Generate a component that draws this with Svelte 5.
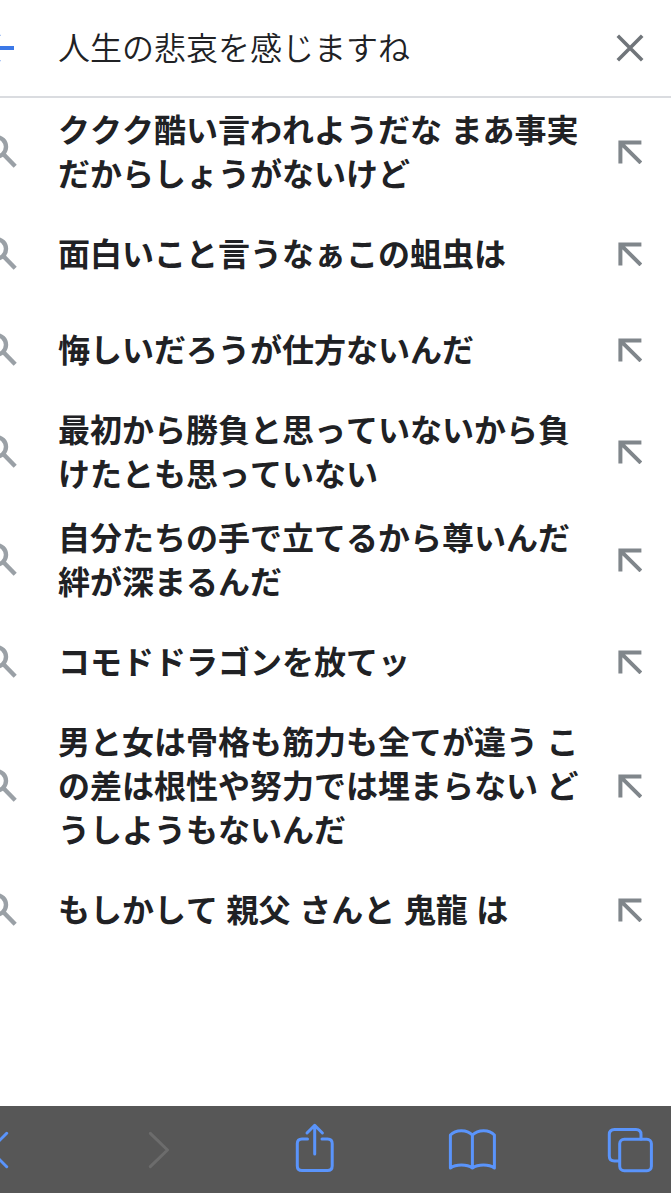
<script>
  const query = '人生の悲哀を感じますね'

  const suggestions = [
    ['ククク酷い言われようだな まあ事実', 'だからしょうがないけど'],
    ['面白いこと言うなぁこの蛆虫は'],
    ['悔しいだろうが仕方ないんだ'],
    ['最初から勝負と思っていないから負', 'けたとも思っていない'],
    ['自分たちの手で立てるから尊いんだ', '絆が深まるんだ'],
    ['コモドドラゴンを放てッ'],
    ['男と女は骨格も筋力も全てが違う こ', 'の差は根性や努力では埋まらない ど', 'うしようもないんだ'],
    ['もしかして 親父 さんと 鬼龍 は']
  ]
</script>

<main class="page">
  <header class="search">
    <svg class="back" width="58" height="32" viewBox="0 0 58 32">
      <path d="M14 16H-14M-0.7 1.9L-14.8 16L-0.7 30.1" />
    </svg>
    <span class="query">{query}</span>
    <svg class="clear" width="28" height="28" viewBox="0 0 28 28">
      <path d="M1.8 1.8L26.2 26.2M26.2 1.8L1.8 26.2" />
    </svg>
  </header>

  <ul class="list">
    {#each suggestions as lines}
      <li class="row">
        <svg class="glass" width="58" height="36" viewBox="0 0 58 36">
          <circle cx="-3.8" cy="12.8" r="9.8" />
          <path d="M3.5 20.2L15.2 32.2" />
        </svg>
        <p class="text">
          {#each lines as line}
            <span>{line}</span>
          {/each}
        </p>
        <svg class="insert" width="24" height="24" viewBox="0 0 24 24">
          <path d="M2.4 23.4V2.6H23.4M2.4 2.6L22.9 22.9" />
        </svg>
      </li>
    {/each}
  </ul>

  <nav class="toolbar">
    <svg width="671" height="87" viewBox="0 0 671 87">
      <path d="M6.7 27.3L-10 44L6.7 60.7" />
      <path class="off" d="M150.3 27.3L167.5 44L150.3 60.7" />
      <path d="M307.5 33H302Q297.3 33 297.3 37.5V60Q297.3 64.5 302 64.5H327.5Q332.2 64.5 332.2 60V37.5Q332.2 33 327.5 33H322" />
      <path d="M314.7 48V19.5M307 27L314.7 19.3L322.4 27" />
      <path d="M472.4 29C467 23.5 456 23 450.4 29V62C456 58 467 58 472.4 62C478 58 489 58 494.4 62V29C489 23 478 23.5 472.4 29V62" />
      <path d="M619 55H614.5Q609.3 55 609.3 50V28.5Q609.3 23.5 614.5 23.5H636Q641 23.5 641 28.5V33" />
      <rect x="619.7" y="33.3" width="31.7" height="31.4" rx="4.5" />
    </svg>
  </nav>
</main>

<style>
:global(body) {
  margin: 0;
  background: #fff;
}

.page {
  width: 671px;
  height: 1193px;
  overflow: hidden;
  display: flex;
  flex-direction: column;
  background: #fff;
  color: #202124;
  font-family: "Noto Sans CJK JP", sans-serif;
  font-kerning: none;
}

svg {
  display: block;
  flex: none;
  fill: none;
}

.search {
  height: 96px;
  display: flex;
  align-items: center;
  border-bottom: 2px solid #dadce0;
}

.back {
  stroke: #3b78e7;
  stroke-width: 4;
}

.query {
  flex: 1;
  padding-bottom: 4px;
  font-family: "Noto Sans CJK JP DemiLight", "Noto Sans CJK JP", sans-serif;
  font-size: 32px;
  font-weight: 350;
}

.clear {
  margin-right: 27px;
  stroke: #70757a;
  stroke-width: 3.6;
}

.list {
  flex: 1;
  margin: 0;
  padding: 0;
  list-style: none;
}

.row {
  min-height: 96px;
  padding: 10px 0;
  box-sizing: border-box;
  display: flex;
  align-items: center;
}

.glass {
  stroke: #9aa0a6;
  stroke-width: 4.4;
}

.text {
  flex: 1;
  margin: -2px 0 2px;
  font-size: 32px;
  font-weight: 700;
  line-height: 44px;
  word-spacing: 1.3px;
}

.text span {
  display: block;
  white-space: nowrap;
}

.insert {
  margin-right: 29px;
  stroke: #80868b;
  stroke-width: 4;
}

.toolbar {
  height: 87px;
  background: #575757;
}

.toolbar path,
.toolbar rect {
  stroke: #5a94fb;
  stroke-width: 3;
  stroke-linecap: round;
  stroke-linejoin: round;
}

.toolbar .off {
  stroke: #6c6c6c;
}
</style>
